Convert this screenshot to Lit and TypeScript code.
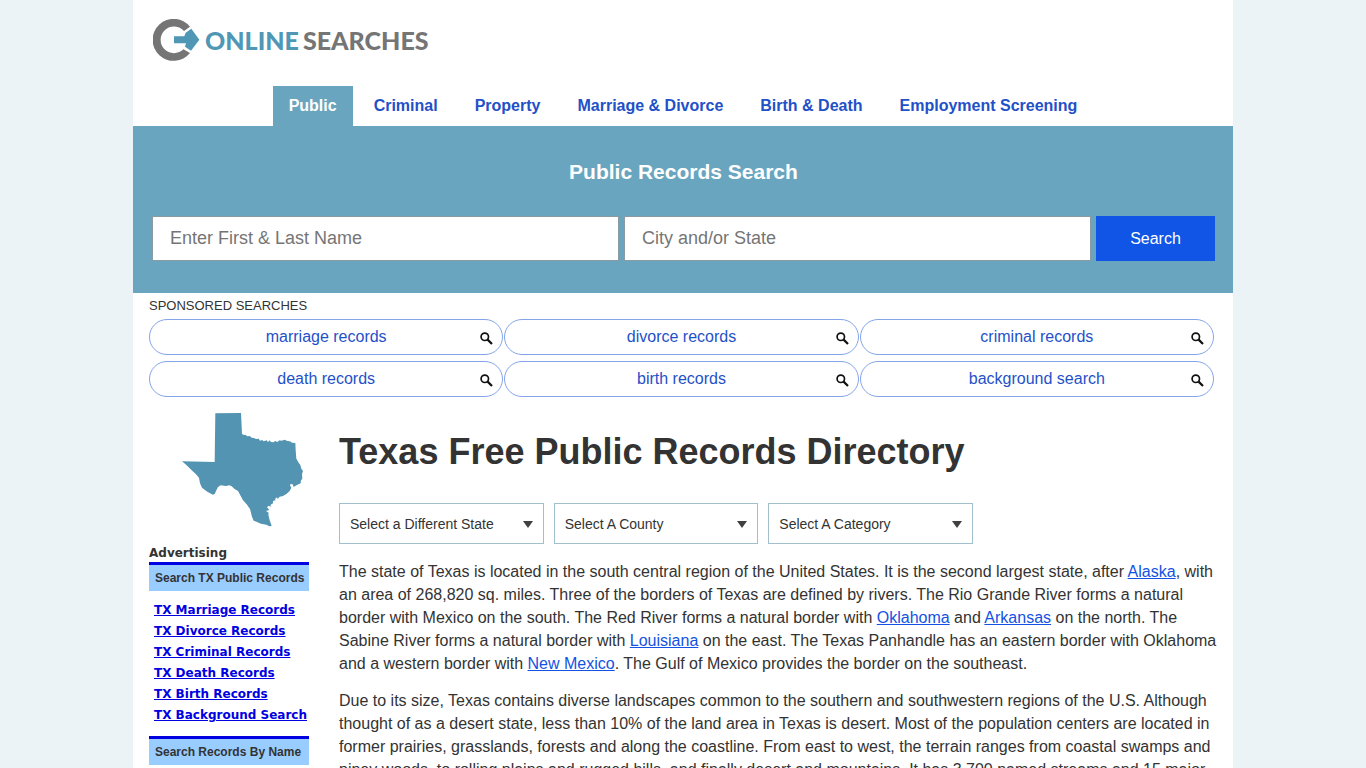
import { LitElement, html, css } from "lit";
import { customElement, state } from "lit/decorators.js";

const TABS = ["Public", "Criminal", "Property", "Marriage & Divorce", "Birth & Death", "Employment Screening"];

const SPONSORED = [
  "marriage records",
  "divorce records",
  "criminal records",
  "death records",
  "birth records",
  "background search",
];

const AD_LINKS = [
  "TX Marriage Records",
  "TX Divorce Records",
  "TX Criminal Records",
  "TX Death Records",
  "TX Birth Records",
  "TX Background Search",
];

const PICKERS = [
  { id: "state", label: "Select a Different State", options: ["Alaska", "Arkansas", "Louisiana", "New Mexico", "Oklahoma"] },
  { id: "county", label: "Select A County", options: ["Bexar", "Dallas", "Harris", "Travis"] },
  { id: "category", label: "Select A Category", options: ["Birth Records", "Death Records", "Marriage Records"] },
];

@customElement("site-logo")
export class SiteLogo extends LitElement {
  static styles = css`
    :host {
      display: flex;
    }
    .logo {
      display: flex;
      align-items: center;
      gap: 5px;
      text-decoration: none;
      color: #757575;
      font: 900 25px/42px Lato, sans-serif;
      white-space: nowrap;
    }
    .mark {
      display: block;
    }
    .words {
      display: flex;
      gap: 4px;
    }
    .blue {
      color: #4f97b4;
    }
  `;

  render() {
    return html`
      <a class="logo" href="#" aria-label="Online Searches">
        <svg class="mark" width="47" height="42" viewBox="0 0 141 126" aria-hidden="true">
          <path d="M111 23 A63 63 0 1 0 111 102 L91 91 A40 40 0 1 1 93 36 Z" fill="#757575" />
          <path d="M63 52 H94 L98 41 L115 29 L139 62 L114 95 L96 83 L99 73 H63 Z" fill="#4f97b4" />
        </svg>
        <span class="words"><span class="blue">ONLINE</span><span>SEARCHES</span></span>
      </a>
    `;
  }
}

@customElement("sponsored-searches")
export class SponsoredSearches extends LitElement {
  static styles = css`
    :host {
      display: block;
      padding: 5px 19px 0 16px;
    }
    .title {
      margin: 0 0 5px;
      font-size: 13px;
      font-weight: 400;
      line-height: 16px;
    }
    .pills {
      display: grid;
      grid-template-columns: repeat(3, 1fr);
      gap: 6px 1px;
      margin: 0;
      padding: 0;
      list-style: none;
    }
    .pill {
      position: relative;
      display: block;
      box-sizing: border-box;
      height: 36px;
      border: 1px solid #84a4e8;
      border-radius: 18px;
      color: #1f51c8;
      font-size: 16px;
      line-height: 34px;
      text-align: center;
      text-decoration: none;
    }
    .glass {
      position: absolute;
      top: 12px;
      right: 9px;
    }
  `;

  render() {
    return html`
      <h2 class="title">SPONSORED SEARCHES</h2>
      <ul class="pills">
        ${SPONSORED.map(
          (name) => html`<li>
            <a class="pill" href="#">
              ${name}
              <svg class="glass" width="13" height="13" viewBox="0 0 13 13" fill="none" stroke="#111" aria-hidden="true">
                <circle cx="4.8" cy="4.8" r="3.7" stroke-width="1.7" />
                <path d="M7.6 7.6 L12 12" stroke-width="2.2" />
              </svg>
            </a>
          </li>`,
        )}
      </ul>
    `;
  }
}

@customElement("side-bar")
export class SideBar extends LitElement {
  static styles = css`
    :host {
      display: block;
      font-weight: 700;
    }
    .shape {
      display: block;
      margin: 0 0 18px 33px;
    }
    .caption {
      margin: 0;
      font: 700 12px/17px "DejaVu Sans", sans-serif;
    }
    .box {
      margin: 0;
      border-top: 3px solid #0000e0;
      background: #99ccff;
      padding-left: 6px;
      font-size: 12px;
      line-height: 26px;
      white-space: nowrap;
    }
    .links {
      margin: 9px 0 10px;
      padding: 0 0 0 5px;
      list-style: none;
      font: 700 12px/21px "DejaVu Sans", sans-serif;
      white-space: nowrap;
    }
    .links a {
      color: #0000e0;
    }
  `;

  render() {
    return html`
      <svg class="shape" width="121" height="114" viewBox="36 39 363 342" role="img" aria-label="Texas">
        <path
          fill="#5294b1"
          d="M136 40 L213 39 L216 102 L222 105 L226 104 L232 109 L239 108 L245 113 L252 114 L258 117 L266 116 L270 122 L277 120 L281 124 L290 121 L294 126 L299 121 L303 126 L310 127 L316 123 L322 126 L329 121 L334 122 L345 119 L351 123 L360 124 L366 128 L376 129 L377 151 L379 176 L386 188 L391 195 L394 206 L399 213 L396 222 L397 236 L393 241 L392 250 L381 255 L371 261 L368 253 L362 252 L360 256 L364 263 L359 273 L350 281 L339 288 L329 290 L323 297 L321 292 L315 297 L317 301 L309 303 L309 310 L301 315 L304 320 L296 317 L291 322 L298 330 L288 333 L296 338 L295 344 L299 361 L305 378 L298 379 L289 374 L273 371 L251 362 L246 350 L240 327 L230 313 L219 301 L211 286 L204 273 L193 266 L185 259 L178 256 L168 258 L152 256 L144 261 L138 273 L134 282 L129 284 L113 276 L96 263 L90 250 L87 233 L78 223 L62 208 L49 195 L36 184 L134 186 Z"
        />
      </svg>
      <p class="caption">Advertising</p>
      <h2 class="box">Search TX Public Records</h2>
      <ul class="links">
        ${AD_LINKS.map((name) => html`<li><a href="#">${name}</a></li>`)}
      </ul>
      <h2 class="box">Search Records By Name</h2>
    `;
  }
}

@customElement("state-article")
export class StateArticle extends LitElement {
  static styles = css`
    :host {
      display: block;
    }
    .heading {
      margin: 17px 0 29px;
      font-size: 36px;
      line-height: 44px;
    }
    .pickers {
      display: grid;
      grid-template-columns: repeat(3, 1fr);
      gap: 10px;
      max-width: 634px;
      margin-bottom: 16px;
    }
    .picker {
      position: relative;
      display: block;
    }
    .select {
      appearance: none;
      box-sizing: border-box;
      width: 100%;
      height: 41px;
      padding: 0 30px 0 10px;
      border: 1px solid #9fc0cc;
      border-radius: 0;
      background: #fff;
      color: #333;
      font: 14px "Liberation Sans", Arial, sans-serif;
      display: block;
    }
    .arrow {
      position: absolute;
      right: 11px;
      top: 18px;
      pointer-events: none;
    }
    .text {
      margin: 0 0 14px;
      font-size: 16px;
      line-height: 23px;
    }
    .text a {
      color: #1352e2;
    }
  `;

  render() {
    return html`
      <h1 class="heading">Texas Free Public Records Directory</h1>
      <div class="pickers">
        ${PICKERS.map(
          (p) => html`<label class="picker" for=${p.id}>
            <select class="select" id=${p.id} aria-label=${p.label}>
              <option>${p.label}</option>
              ${p.options.map((o) => html`<option>${o}</option>`)}
            </select>
            <svg class="arrow" width="10" height="7" viewBox="0 0 10 7" aria-hidden="true">
              <path d="M0 0 H10 L5 7 Z" fill="#404040" />
            </svg>
          </label>`,
        )}
      </div>
      <p class="text">
        The state of Texas is located in the south central region of the United States. It is the second largest state,
        after <a href="#">Alaska</a>, with an area of 268,820 sq. miles. Three of the borders of Texas are defined by
        rivers. The Rio Grande River forms a natural border with Mexico on the south. The Red River forms a natural
        border with <a href="#">Oklahoma</a> and <a href="#">Arkansas</a> on the north. The Sabine River forms a natural
        border with <a href="#">Louisiana</a> on the east. The Texas Panhandle has an eastern border with Oklahoma and a
        western border with <a href="#">New Mexico</a>. The Gulf of Mexico provides the border on the southeast.
      </p>
      <p class="text">
        Due to its size, Texas contains diverse landscapes common to the southern and southwestern regions of the U.S.
        Although thought of as a desert state, less than 10% of the land area in Texas is desert. Most of the population
        centers are located in former prairies, grasslands, forests and along the coastline. From east to west, the
        terrain ranges from coastal swamps and piney woods, to rolling plains and rugged hills, and finally desert and
        mountains. It has 3,700 named streams and 15 major rivers.
      </p>
    `;
  }
}

@customElement("app-root")
export class AppRoot extends LitElement {
  static styles = css`
    :host {
      display: block;
      min-height: 100vh;
      background: #ebf3f6;
      color: #333;
      font-family: "Liberation Sans", Arial, sans-serif;
    }
    .page {
      box-sizing: border-box;
      max-width: 1100px;
      min-height: 100vh;
      margin: 0 auto;
      background: #fff;
    }
    .logo {
      padding: 19px 20px 25px;
    }
    .tabs {
      display: flex;
      justify-content: center;
      gap: 5px;
    }
    .tab {
      padding: 0 16px;
      color: #1f51c8;
      font-size: 16px;
      font-weight: 700;
      line-height: 40px;
      text-decoration: none;
      white-space: nowrap;
    }
    .tab.active {
      background: #69a5be;
      color: #fff;
    }
    .search {
      padding: 34px 18px 32px 19px;
      background: #69a5be;
    }
    .title {
      margin: 0 0 32px;
      color: #fff;
      font-size: 21px;
      line-height: 24px;
      text-align: center;
    }
    .fields {
      display: flex;
      gap: 5px;
    }
    .field {
      box-sizing: border-box;
      flex: 1;
      min-width: 0;
      height: 45px;
      padding: 0 17px 1px;
      border: 1px solid #8b9ba3;
      border-radius: 0;
      background: #fff;
      font: 18px "Liberation Sans", Arial, sans-serif;
    }
    .field::placeholder {
      color: #757575;
    }
    .submit {
      width: 119px;
      padding: 0;
      border: 0;
      background: #1155e6;
      color: #fff;
      font: 16px "Liberation Sans", Arial, sans-serif;
    }
    .columns {
      display: grid;
      grid-template-columns: 160px minmax(0, 1fr);
      gap: 30px;
      padding: 16px 16px 24px;
    }
  `;

  @state() private active = 0;

  render() {
    return html`
      <div class="page">
        <header>
          <site-logo class="logo"></site-logo>
          <nav class="tabs">
            ${TABS.map(
              (name, i) => html`<a
                class="tab ${i === this.active ? "active" : ""}"
                href="#"
                @click=${(e: Event) => {
                  e.preventDefault();
                  this.active = i;
                }}
                >${name}</a
              >`,
            )}
          </nav>
        </header>
        <form class="search" @submit=${(e: Event) => e.preventDefault()}>
          <h2 class="title">Public Records Search</h2>
          <div class="fields">
            <input class="field" type="text" placeholder="Enter First &amp; Last Name" aria-label="Enter First &amp; Last Name" />
            <input class="field" type="text" placeholder="City and/or State" aria-label="City and/or State" />
            <button class="submit" type="submit">Search</button>
          </div>
        </form>
        <sponsored-searches></sponsored-searches>
        <div class="columns">
          <side-bar></side-bar>
          <main><state-article></state-article></main>
        </div>
      </div>
    `;
  }
}
